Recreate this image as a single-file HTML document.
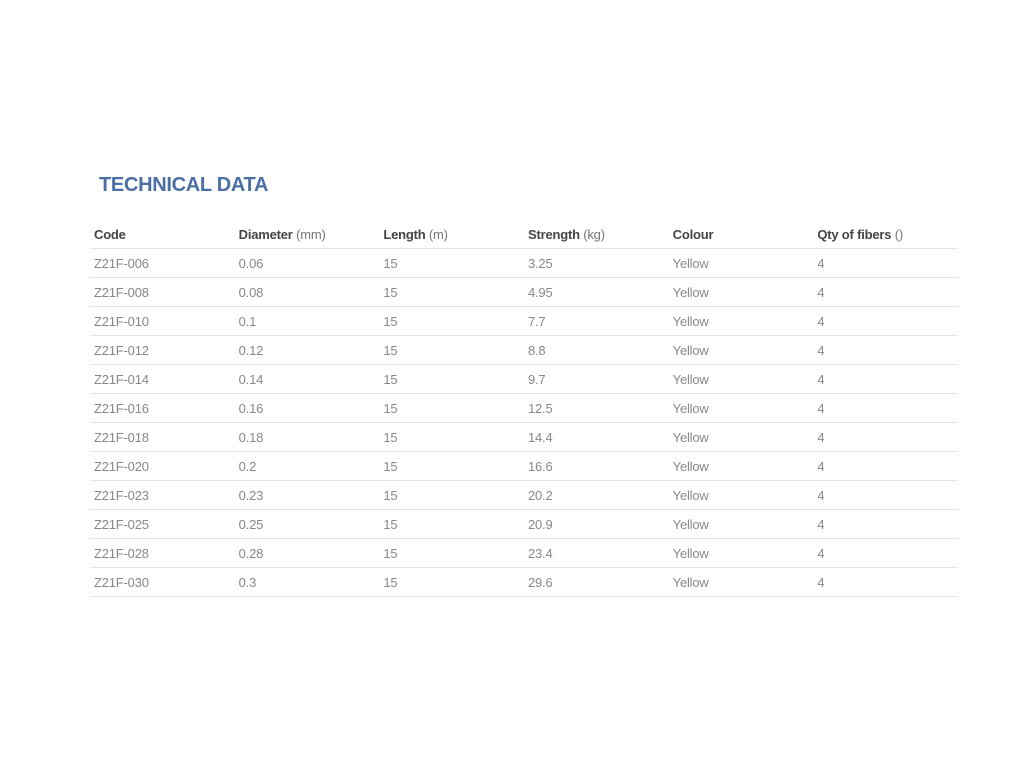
<!DOCTYPE html>
<html><head><meta charset="utf-8"><style>
body{margin:0;background:#fff;font-family:"Liberation Sans",sans-serif;}
h2{position:absolute;left:99px;top:174px;margin:0;font-size:20px;font-weight:bold;color:#4a6fa5;letter-spacing:-0.3px;}
table{position:absolute;left:90px;top:220px;width:868px;border-collapse:collapse;font-size:13px;}
td,th{height:28px;padding:0 0 0 4px;text-align:left;border-bottom:1px solid #e4e4e4;width:141px;color:#888;font-weight:normal;letter-spacing:-0.2px;}
th{color:#777;}
th b{color:#444;}
</style></head><body>
<h2>TECHNICAL DATA</h2>
<table>
<tr><th><b>Code</b></th><th><b>Diameter</b> (mm)</th><th><b>Length</b> (m)</th><th><b>Strength</b> (kg)</th><th><b>Colour</b></th><th><b>Qty of fibers</b> ()</th></tr>
<tr><td>Z21F-006</td><td>0.06</td><td>15</td><td>3.25</td><td>Yellow</td><td>4</td></tr>
<tr><td>Z21F-008</td><td>0.08</td><td>15</td><td>4.95</td><td>Yellow</td><td>4</td></tr>
<tr><td>Z21F-010</td><td>0.1</td><td>15</td><td>7.7</td><td>Yellow</td><td>4</td></tr>
<tr><td>Z21F-012</td><td>0.12</td><td>15</td><td>8.8</td><td>Yellow</td><td>4</td></tr>
<tr><td>Z21F-014</td><td>0.14</td><td>15</td><td>9.7</td><td>Yellow</td><td>4</td></tr>
<tr><td>Z21F-016</td><td>0.16</td><td>15</td><td>12.5</td><td>Yellow</td><td>4</td></tr>
<tr><td>Z21F-018</td><td>0.18</td><td>15</td><td>14.4</td><td>Yellow</td><td>4</td></tr>
<tr><td>Z21F-020</td><td>0.2</td><td>15</td><td>16.6</td><td>Yellow</td><td>4</td></tr>
<tr><td>Z21F-023</td><td>0.23</td><td>15</td><td>20.2</td><td>Yellow</td><td>4</td></tr>
<tr><td>Z21F-025</td><td>0.25</td><td>15</td><td>20.9</td><td>Yellow</td><td>4</td></tr>
<tr><td>Z21F-028</td><td>0.28</td><td>15</td><td>23.4</td><td>Yellow</td><td>4</td></tr>
<tr><td>Z21F-030</td><td>0.3</td><td>15</td><td>29.6</td><td>Yellow</td><td>4</td></tr>
</table>
</body></html>
